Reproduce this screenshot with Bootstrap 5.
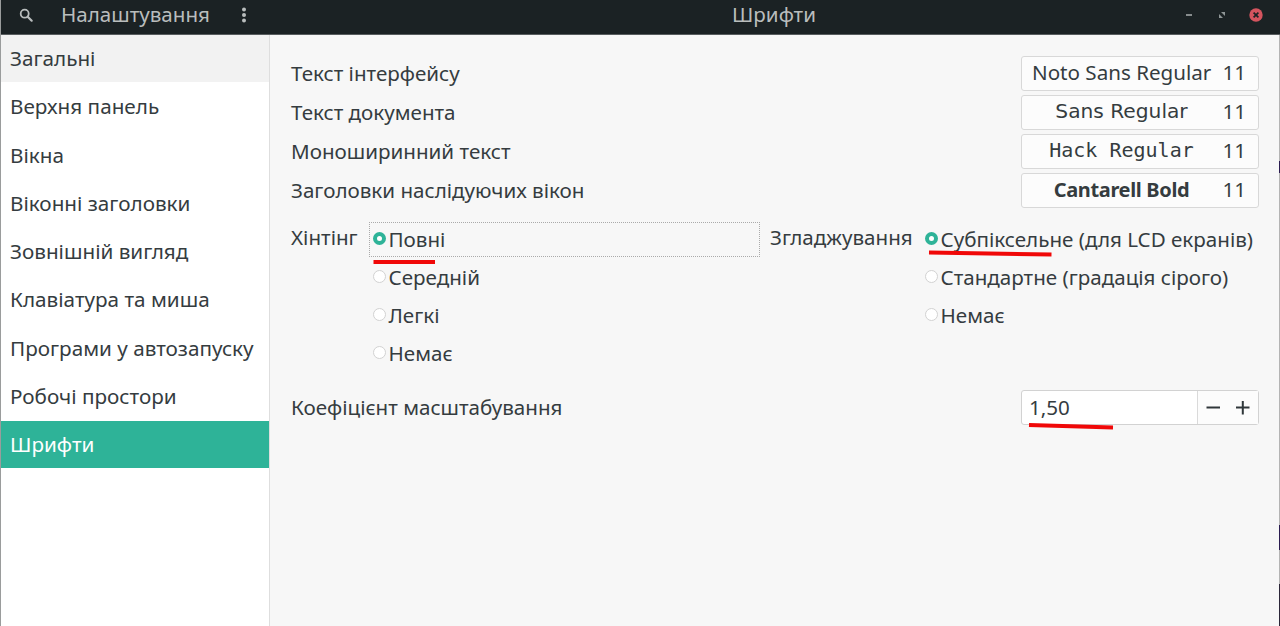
<!DOCTYPE html>
<html lang="uk">
<head>
  <meta charset="UTF-8">
  <meta name="viewport" content="width=device-width, initial-scale=1.0">
  <title>Шрифти</title>
  <link href="https://cdn.jsdelivr.net/npm/bootstrap@5.3.3/dist/css/bootstrap.min.css" rel="stylesheet">
  <style>
    body {
      background-color: #f7f7f7;
      color: #353c3f;
      font-family: "Noto Sans", sans-serif;
      font-size: 20.6px;
      line-height: 28px;
    }
    .window {
      height: 626px;
      border-left: 1px solid #9a9c9c;
    }
    .titlebar {
      height: 35px;
      padding-bottom: 4px;
      background-color: #1b2224;
      border-bottom: 1px solid #585d5f;
      color: #b9bdbd;
    }
    .titlebar-left {
      width: 269px;
      padding-left: 18px;
    }
    .app-name {
      margin-left: 27px;
      margin-top: -3px;
      width: 149px;
      white-space: nowrap;
    }
    .dots {
      margin-left: 31px;
    }
    .win-title {
      padding-left: 91px;
      margin-top: -3px;
    }
    .win-buttons {
      width: 93px;
      padding-right: 17px;
    }
    .win-buttons svg:first-child {
      margin-left: -2px;
      margin-right: 2px;
    }
    .sidebar {
      width: 269px;
      background-color: #fff;
      border-right: 1px solid #dedede;
    }
    .sidebar .list-group-item {
      height: 47px;
      margin-top: 0;
      margin-bottom: 1.3px;
      padding: 9px 9px 0;
      border: 0;
      color: inherit;
      font-size: 20.7px;
      line-height: 28px;
      white-space: nowrap;
    }
    .sidebar .hovered {
      background-color: #f2f2f2;
    }
    .sidebar .list-group-item.active {
      margin-top: 0;
      background-color: #2eb398;
      color: #fff;
    }
    .settings {
      padding: 21px 20px 0 21px;
    }
    .edge {
      width: 1px;
      background: linear-gradient(#b4b4b4 126px, #2a1c50 126px 138px, #b4b4b4 138px 490px, #2a1c50 490px 515px, #b4b4b4 515px 549px, #2b2638 549px);
    }
    .font-row {
      height: 35px;
      margin-bottom: 4px;
    }
    .font-row > span {
      padding-bottom: 2px;
    }
    .font-btn {
      width: 238px;
      height: 35px;
      padding: 0 12px 3px 10px;
      border: 1px solid #d8d8d8;
      border-radius: 3px;
      background-color: #fcfcfc;
      color: inherit;
      font-size: inherit;
      line-height: 28px;
      white-space: nowrap;
    }
    .font-name {
      width: 179px;
    }
    .face-sans { font-family: "DejaVu Sans", sans-serif; font-size: 20.2px; }
    .face-mono { font-family: "DejaVu Sans Mono", monospace; font-size: 20px; }
    .face-bold { font-weight: 700; font-size: 20px; letter-spacing: -.35px; padding-top: 1px; }
    .radio-area {
      margin-top: 14px;
      white-space: nowrap;
    }
    .radio-label {
      line-height: 31px;
    }
    .hint-label { width: 78px; }
    .hint-group { width: 391px; }
    .smooth-label { width: 151px; margin-left: 10px; }
    .radio-row {
      height: 35px;
      margin-bottom: 3px;
      padding-left: 3px;
      padding-bottom: 1px;
      border: 1px solid transparent;
    }
    .radio-row.focused {
      border: 1px dotted #aaa;
    }
    .dot {
      width: 13px;
      height: 13px;
      margin: 0 2.5px 2px 0;
      border: 1px solid #d2d2d2;
      border-radius: 50%;
      background-color: #fff;
    }
    .hint-group .dot {
      margin-left: -.5px;
      margin-right: 3px;
    }
    .dot.on {
      border: 4.5px solid #2eb398;
    }
    .scale-row {
      margin-top: 16px;
      height: 35px;
    }
    .scale-row > span {
      padding-bottom: 1px;
    }
    .spin {
      width: 238px;
      height: 35px;
      border: 1px solid #d2d2d2;
      border-radius: 3px;
      background-color: #fff;
    }
    .spin-value {
      width: 175px;
      padding: 0 0 1px 7px;
    }
    .spin-buttons {
      padding-right: 1px;
      border-left: 1px solid #dadada;
      background-color: #fcfcfc;
    }
    .marker {
      position: absolute;
      left: 0;
      top: 0;
      pointer-events: none;
    }
  </style>
</head>
<body>

<div class="window d-flex flex-column position-relative overflow-hidden">
  <!-- Title bar -->
  <header class="titlebar d-flex align-items-center flex-shrink-0">
    <div class="titlebar-left d-flex align-items-center">
      <svg width="15" height="15" viewBox="0 0 15 15" fill="none" stroke="#b9bdbd"><circle cx="5.7" cy="5.7" r="4" stroke-width="1.8"/><path d="M8.7 8.7l4 4" stroke-width="2.2" stroke-linecap="round"/></svg>
      <span class="app-name">Налаштування</span>
      <svg class="dots" width="6" height="16" viewBox="0 0 6 16" fill="#b9bdbd"><circle cx="3" cy="2.5" r="2"/><circle cx="3" cy="8" r="2"/><circle cx="3" cy="13.5" r="2"/></svg>
    </div>
    <div class="flex-grow-1 text-center win-title">Шрифти</div>
    <div class="win-buttons d-flex align-items-center justify-content-between">
      <svg width="8" height="14" viewBox="0 0 8 14"><path d="M1 7h6" stroke="#a3a8a8" stroke-width="1.6"/></svg>
      <svg width="8" height="8" viewBox="0 0 8 8" fill="#8f9696"><path d="M3 1h4v4zM1 3v4h4z"/></svg>
      <svg width="14" height="14" viewBox="0 0 14 14"><circle cx="7" cy="7" r="6.7" fill="#d4545e"/><path d="M4.6 4.6l4.8 4.8M9.4 4.6l-4.8 4.8" stroke="#1b2224" stroke-width="1.7"/></svg>
    </div>
  </header>

  <div class="d-flex flex-grow-1">
    <!-- Categories -->
    <nav class="sidebar list-group list-group-flush rounded-0 flex-shrink-0">
      <a class="list-group-item hovered">Загальні</a>
      <a class="list-group-item">Верхня панель</a>
      <a class="list-group-item">Вікна</a>
      <a class="list-group-item">Віконні заголовки</a>
      <a class="list-group-item">Зовнішній вигляд</a>
      <a class="list-group-item">Клавіатура та миша</a>
      <a class="list-group-item">Програми у автозапуску</a>
      <a class="list-group-item">Робочі простори</a>
      <a class="list-group-item active">Шрифти</a>
    </nav>

    <!-- Font settings -->
    <main class="settings flex-grow-1">
      <div class="font-row d-flex align-items-center justify-content-between">
        <span>Текст інтерфейсу</span>
        <button class="btn font-btn d-flex align-items-center justify-content-between"><span class="font-name">Noto Sans Regular</span><span>11</span></button>
      </div>
      <div class="font-row d-flex align-items-center justify-content-between">
        <span>Текст документа</span>
        <button class="btn font-btn d-flex align-items-center justify-content-between"><span class="font-name face-sans">Sans Regular</span><span>11</span></button>
      </div>
      <div class="font-row d-flex align-items-center justify-content-between">
        <span>Моноширинний текст</span>
        <button class="btn font-btn d-flex align-items-center justify-content-between"><span class="font-name face-mono">Hack Regular</span><span>11</span></button>
      </div>
      <div class="font-row d-flex align-items-center justify-content-between">
        <span>Заголовки наслідуючих вікон</span>
        <button class="btn font-btn d-flex align-items-center justify-content-between"><span class="font-name face-bold">Cantarell Bold</span><span>11</span></button>
      </div>

      <div class="radio-area d-flex align-items-start">
        <div class="radio-label hint-label">Хінтінг</div>
        <div class="hint-group">
          <div class="radio-row focused d-flex align-items-center"><span class="dot on"></span>Повні</div>
          <div class="radio-row d-flex align-items-center"><span class="dot"></span>Середній</div>
          <div class="radio-row d-flex align-items-center"><span class="dot"></span>Легкі</div>
          <div class="radio-row d-flex align-items-center"><span class="dot"></span>Немає</div>
        </div>
        <div class="radio-label smooth-label">Згладжування</div>
        <div>
          <div class="radio-row d-flex align-items-center"><span class="dot on"></span>Субпіксельне (для LCD екранів)</div>
          <div class="radio-row d-flex align-items-center"><span class="dot"></span>Стандартне (градація сірого)</div>
          <div class="radio-row d-flex align-items-center"><span class="dot"></span>Немає</div>
        </div>
      </div>

      <div class="scale-row d-flex align-items-center justify-content-between">
        <span>Коефіцієнт масштабування</span>
        <div class="spin d-flex">
          <div class="spin-value d-flex align-items-center">1,50</div>
          <div class="spin-buttons d-flex align-items-center justify-content-center flex-grow-1">
            <svg width="48" height="16" viewBox="0 0 48 16" stroke="#30373a" stroke-width="2"><path d="M2.5 7.5H16M32 7.5h13.5M38.8 1v13.5"/></svg>
          </div>
        </div>
      </div>
    </main>
    <div class="edge"></div>
  </div>

  <!-- Red marker strokes over the chosen values -->
  <svg class="marker" width="1279" height="626" fill="none" stroke="#f00808" stroke-width="4">
    <path d="M372.5 262H434M928 252.5l122.5 2M1028 425l84 2.5"/>
  </svg>
</div>

<script src="https://cdn.jsdelivr.net/npm/bootstrap@5.3.3/dist/js/bootstrap.bundle.min.js"></script>
</body>
</html>
